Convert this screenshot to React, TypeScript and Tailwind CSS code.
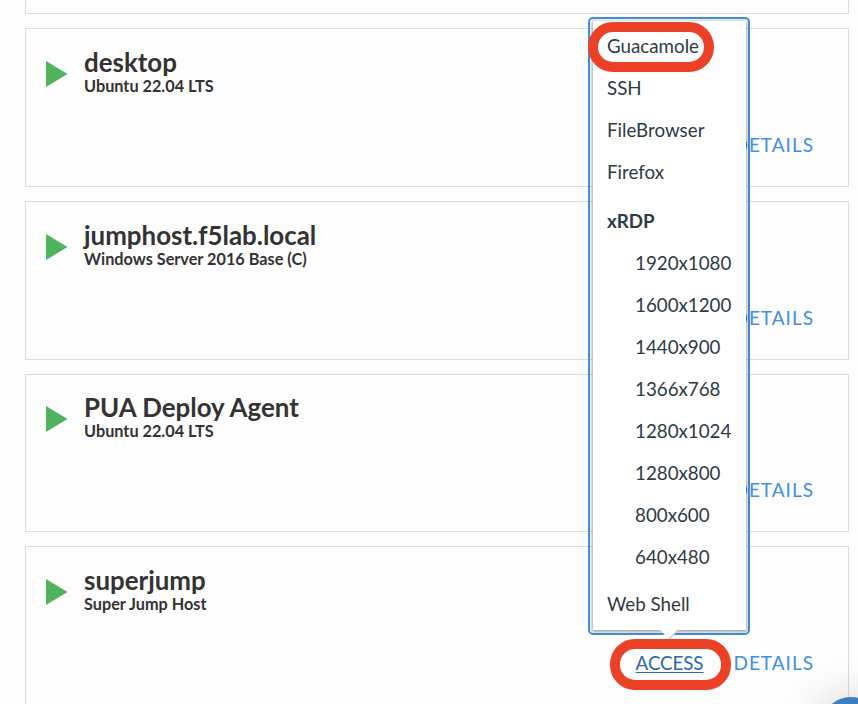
type Machine = { name: string; os: string; box: string; open?: boolean };

const machines: Machine[] = [
  { name: "desktop", os: "Ubuntu 22.04 LTS", box: "h-[159px] pt-5" },
  { name: "jumphost.f5lab.local", os: "Windows Server 2016 Base (C)", box: "h-[159px] pt-5" },
  { name: "PUA Deploy Agent", os: "Ubuntu 22.04 LTS", box: "h-[158px] pt-[19px]" },
  { name: "superjump", os: "Super Jump Host", box: "h-[159px] pt-5", open: true },
];

const resolutions = ["1920x1080", "1600x1200", "1440x900", "1366x768", "1280x1024", "1280x800", "800x600", "640x480"];

function Card({ machine }: { machine: Machine }) {
  return (
    <section className={`flex shrink-0 flex-col justify-between border border-[#dcdcdc] bg-[#fdfdfd] pr-[34px] pb-7 pl-5 ${machine.box}`}>
      <div className="flex">
        <svg className="mt-3 h-[26px] w-[22px] shrink-0" viewBox="0 0 22 26">
          <path d="M0 0 L21.5 13 L0 26 Z" fill="#50b45f" />
        </svg>
        <div className="ml-4 text-[#333]">
          <h2 className="-mt-px h-[29px] text-[25.9px] leading-7 font-bold whitespace-nowrap">{machine.name}</h2>
          <p className="text-[16.25px] leading-[18px] font-bold whitespace-nowrap">{machine.os}</p>
        </div>
      </div>
      <div className="flex items-center justify-end gap-[30px] text-[19px] leading-[26px] text-[#428fdf]">
        {machine.open && <a className="text-[18.8px] tracking-[-0.1px] text-[#2c69a8] underline decoration-1 underline-offset-2">ACCESS</a>}
        <a className="tracking-[1px]">DETAILS</a>
      </div>
    </section>
  );
}

function AccessMenu() {
  return (
    <div className="absolute top-[17px] left-[588px] h-[618px] w-[162px] rounded-[5px] border-2 border-[#428fdf] p-[2px]">
      <nav className="ml-[1px] h-[609px] w-[153px] bg-white pt-1 text-[18.75px] text-[#2d3b45] shadow-[0_1px_3px_1px_rgba(0,0,0,0.35)]">
        {["Guacamole", "SSH", "FileBrowser", "Firefox"].map((item) => (
          <a key={item} className="block h-[42px] pl-[14px] leading-[42px]">{item}</a>
        ))}
        <div className="mt-[7px] h-[42px] pl-[14px] leading-[42px] font-bold">xRDP</div>
        {resolutions.map((item) => (
          <a key={item} className="block h-[42px] pl-[42px] leading-[42px]">{item}</a>
        ))}
        <a className="mt-[5px] block h-[42px] pl-[14px] leading-[42px]">Web Shell</a>
      </nav>
      <svg className="absolute top-[611px] left-[70px] h-3 w-5" viewBox="0 0 20 12">
        <path d="M0 0 H18 L9 9 Z" fill="#fff" />
        <path d="M18 0 L9 9" stroke="#cacaca" strokeWidth="1.2" />
      </svg>
    </div>
  );
}

export default function App() {
  return (
    <main className="relative h-[704px] w-[858px] overflow-hidden bg-[#fdfdfd] font-['Lato',sans-serif]">
      <div className="flex flex-col gap-[14px] pr-[9px] pl-[25px]">
        <div className="h-[14px] border border-t-0 border-[#dcdcdc]" />
        {machines.map((machine) => (
          <Card key={machine.name} machine={machine} />
        ))}
      </div>
      <AccessMenu />
      <div className="absolute top-[22px] left-[588px] h-[50px] w-[126px] rounded-[25px] border-10 border-[#eb4127]" />
      <div className="absolute top-[639px] left-[610px] h-[51px] w-[121px] rounded-[25px] border-10 border-[#eb4127]" />
      <div className="absolute top-[697px] left-[821px] size-[60px] rounded-full bg-[#3c7fc0] shadow-[0_2px_40px_6px_rgba(0,0,0,0.14)]" />
    </main>
  );
}
